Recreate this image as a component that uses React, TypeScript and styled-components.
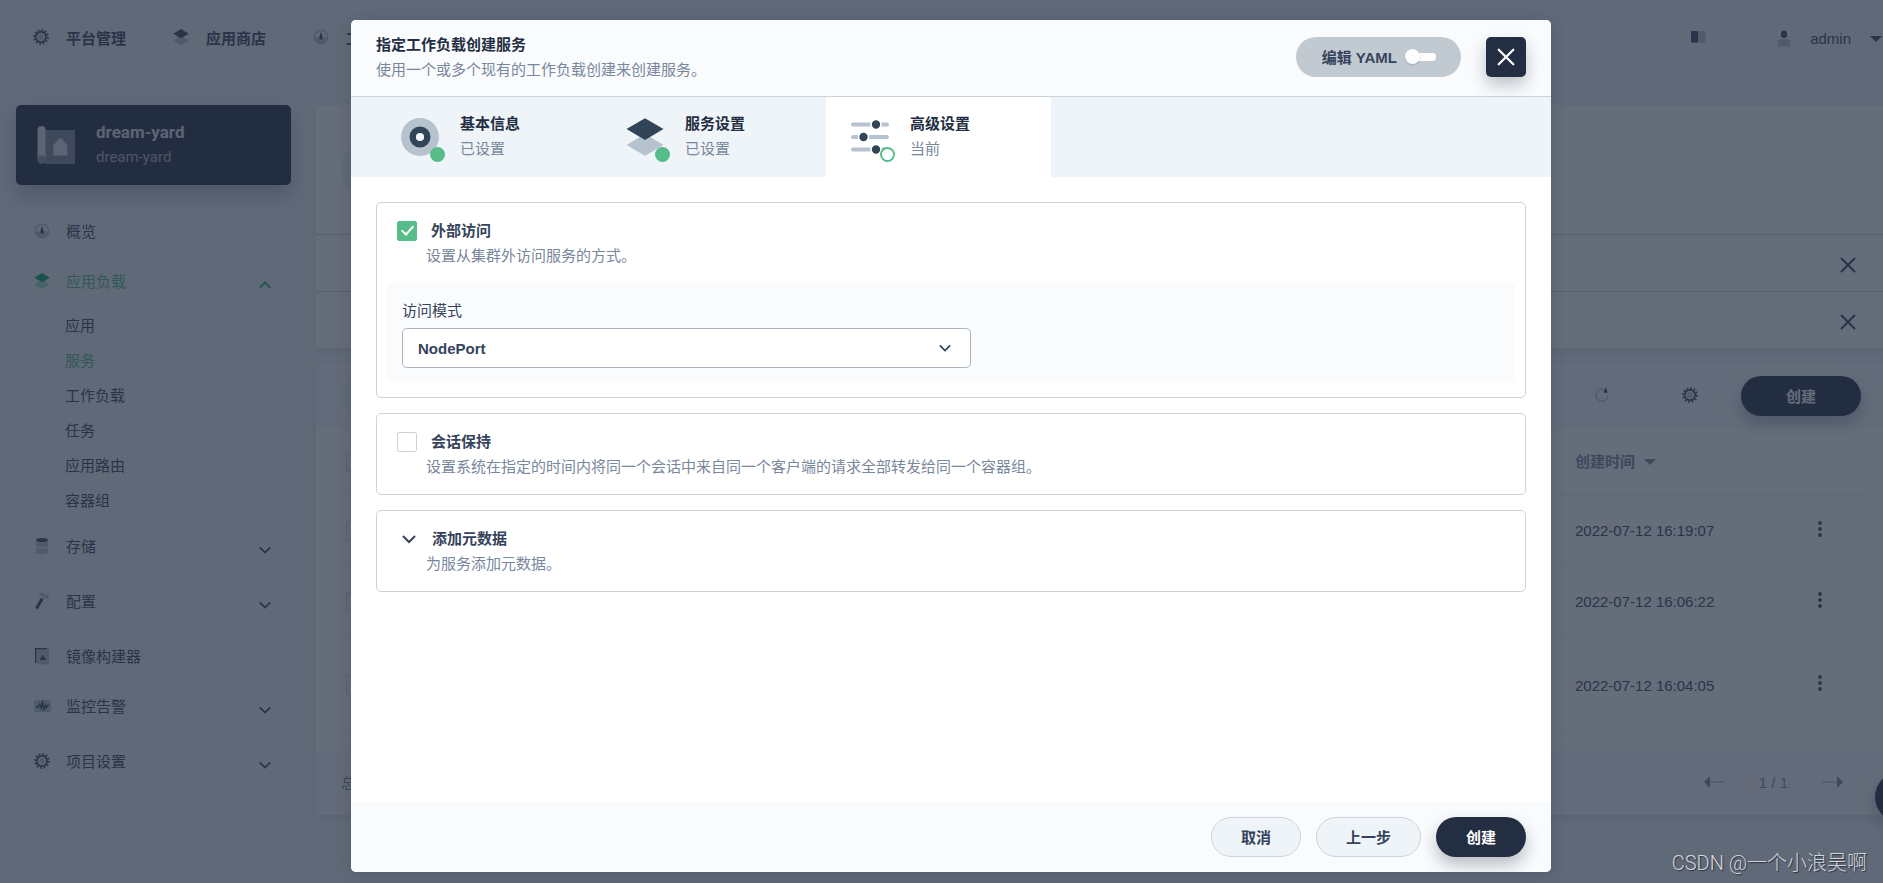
import React from "react";
import styled, { createGlobalStyle, css } from "styled-components";

const color = {
  ink: "#242e42",
  text: "#36435c",
  muted: "#79879c",
  line: "#ccd3db",
  lineDark: "#abb4be",
  page: "#eff4f9",
  soft: "#f9fbfd",
  green: "#55bc8a",
  greenDark: "#00aa72",
  iconDark: "#324558",
  iconLight: "#b6c2cd",
};

const GlobalStyle = createGlobalStyle`
  *, *::before, *::after { box-sizing: border-box; }
  body {
    margin: 0;
    background: ${color.page};
    color: ${color.text};
    font-family: "Liberation Sans", "Noto Sans CJK SC", sans-serif;
    font-size: 15px;
    line-height: 25px;
  }
  button, select, input { font: inherit; color: inherit; }
  button { padding: 0; border: 0; background: none; cursor: pointer; }
  ul { list-style: none; margin: 0; padding: 0; }
  h1, h2, p { margin: 0; font-size: inherit; }
  a { color: inherit; text-decoration: none; }
  svg { display: block; flex: none; }
`;

/* ---------- icons ---------- */

type Tone = { dark?: string; light?: string };

const GearIcon = () => (
  <svg width="16" height="16" viewBox="0 0 16 16" fill="none">
    <circle cx="8" cy="8" r="6.8" stroke={color.iconDark} strokeWidth="2" strokeDasharray="1.78 1.78" />
    <circle cx="8" cy="8" r="5.1" stroke={color.iconDark} strokeWidth="1.7" />
    <circle cx="8" cy="8" r="3" fill={color.iconLight} />
  </svg>
);

const LayersIcon = ({ size = 16, dark = color.iconDark, light = color.iconLight }: Tone & { size?: number }) => (
  <svg width={size} height={size} viewBox="0 0 38 38">
    <path d="M19 16 37.5 27 19 37.8.5 27z" fill={light} />
    <path d="M19 .2 37.5 11 19 22 .5 11z" fill={dark} />
  </svg>
);

const GaugeIcon = () => (
  <svg width="16" height="16" viewBox="0 0 16 16">
    <circle cx="8" cy="8" r="6.8" fill="none" stroke={color.iconLight} strokeWidth="1.4" />
    <path d="M1.400 8.600h13.200a6.600 6.600 0 0 1-13.200 0z" fill={color.iconLight} />
    <path d="M8 2.800 9.800 9a1.800 1.800 0 0 1-3.600 0z" fill={color.iconDark} />
  </svg>
);

const DatabaseIcon = () => (
  <svg width="16" height="18" viewBox="0 0 16 18">
    <path d="M2 3v5.400c0 1 2.600 1.800 6 1.800s6-.8 6-1.800V3zM2 10.600v5c0 1 2.600 1.900 6 1.900s6-.9 6-1.900v-5c-1 .8-3.400 1-6 1s-5-.2-6-1z" fill={color.iconLight} />
    <ellipse cx="8" cy="3" rx="6" ry="2" fill={color.iconDark} />
  </svg>
);

const HammerIcon = () => (
  <svg width="16" height="18" viewBox="0 0 16 18">
    <path d="M3 2.200C6 .4 9.500.6 11.500 2.600c1 .7 2.200.4 3.500 1.200l-.8 3-2.700-.6L8 4.800C7 3 5 2.500 3 2.200z" fill={color.iconLight} />
    <path d="M2.500 16.500 8.200 6.500" stroke={color.iconDark} strokeWidth="3" />
  </svg>
);

const ImageBuilderIcon = () => (
  <svg width="16" height="18" viewBox="0 0 16 18">
    <path d="M2.500 2h12.500v15.500H4.500L2.500 15z" fill={color.iconLight} />
    <path d="M1.700 16V1.600H13" fill="none" stroke={color.iconDark} strokeWidth="1.400" />
    <path d="m8.800 8 3.400 5H5.400z" fill={color.iconDark} />
  </svg>
);

const MonitorIcon = () => (
  <svg width="17" height="12" viewBox="0 0 17 12">
    <rect width="17" height="12" rx="1.500" fill={color.iconLight} />
    <path d="M2 7h2.200l1.500-3 1.500 4 1.500-7 1 9.500L11.500 5l1 2.500L14.500 4" fill="none" stroke={color.iconDark} strokeWidth="1.300" />
  </svg>
);

const BookIcon = () => (
  <svg width="16" height="14" viewBox="0 0 16 14">
    <path d="M8 1h7.500v11.500H8z" fill={color.iconLight} />
    <path d="M1 1h6.200l.8.800V13l-.8-.6H1z" fill={color.iconDark} />
  </svg>
);

const PersonIcon = () => (
  <svg width="14" height="17" viewBox="0 0 14 17">
    <rect x="4" y=".5" width="6" height="7.500" rx="3" fill={color.iconDark} />
    <path d="M1 16.500v-4c0-2 1.500-3.500 3.500-3.500h5c2 0 3.500 1.500 3.500 3.500v4z" fill={color.iconLight} />
  </svg>
);

const ProjectIcon = () => (
  <svg width="38" height="38" viewBox="0 0 38 38">
    <path d="M8 4h30v34H8z" fill="#7d8a9b" />
    <path d="M.5 4a4 4 0 0 1 8 0v28H.5z" fill="#dfe4ea" />
    <circle cx="4.500" cy="33.500" r="4.300" fill="#8e9aa9" />
    <path d="m23.500 11.500 6.800 7.500v10.500H16.500V19z" fill="#dfe4ea" />
  </svg>
);

const ChevronIcon = ({ up, tone = color.iconDark, size = 12 }: { up?: boolean; tone?: string; size?: number }) => (
  <svg width={size} height={size} viewBox="0 0 12 12" fill="none" stroke={tone} strokeWidth="1.700">
    <path d={up ? "M.8 8.600 6 3.400l5.200 5.200" : "M.8 3.400 6 8.600l5.200-5.200"} />
  </svg>
);

const CaretIcon = ({ tone = color.iconDark }: { tone?: string }) => (
  <svg width="12" height="6" viewBox="0 0 12 6">
    <path d="M0 0h12L6 6z" fill={tone} />
  </svg>
);

const CrossIcon = ({ size, tone }: { size: number; tone: string }) => (
  <svg width={size} height={size} viewBox="0 0 16 16" fill="none" stroke={tone} strokeWidth="2" strokeLinecap="round">
    <path d="m1.500 1.500 13 13M14.500 1.500l-13 13" />
  </svg>
);

const RefreshIcon = () => (
  <svg width="16" height="16" viewBox="0 0 16 16">
    <path d="M9.500 2.400A6 6 0 1 0 14 8.500" fill="none" stroke={color.iconLight} strokeWidth="1.600" />
    <path d="M12 0 13.600 6 9.400 5.500z" fill={color.iconDark} />
  </svg>
);

const MoreIcon = () => (
  <svg width="4" height="16" viewBox="0 0 4 16" fill={color.iconDark}>
    <circle cx="2" cy="2" r="1.900" />
    <circle cx="2" cy="8" r="1.900" />
    <circle cx="2" cy="14" r="1.900" />
  </svg>
);

const ArrowIcon = ({ right }: { right?: boolean }) => (
  <svg width="21" height="12" viewBox="0 0 21 12">
    <path d={right ? "M0 6h16" : "M5 6h16"} stroke={color.iconLight} strokeWidth="1.500" />
    <path d={right ? "m21 6-6-6v12z" : "m0 6 6-6v12z"} fill={color.muted} />
  </svg>
);

const TargetIcon = () => (
  <svg width="38" height="38" viewBox="0 0 38 38">
    <circle cx="19" cy="19" r="19" fill={color.iconLight} />
    <circle cx="19" cy="19" r="7.300" fill={color.page} stroke={color.iconDark} strokeWidth="6.400" />
  </svg>
);

const SlidersIcon = () => (
  <svg width="38" height="38" viewBox="0 0 38 38">
    <g stroke={color.iconLight} strokeWidth="4" strokeLinecap="round">
      <path d="M2 6.500h34M2 19h34M2 31.500h34" />
    </g>
    <g fill={color.iconDark} stroke="#fff" strokeWidth="1.600">
      <circle cx="25" cy="6.500" r="5" />
      <circle cx="12.500" cy="19" r="5" />
      <circle cx="25" cy="31.500" r="5" />
    </g>
  </svg>
);

/* ---------- page behind the dialog ---------- */

const Root = styled.div`
  overflow: hidden;
`;

const Shell = styled.div`
  position: relative;
  width: calc(100% + 19px);
  min-height: 100vh;
`;

const TopBar = styled.header`
  display: flex;
  align-items: center;
  justify-content: space-between;
  height: 80px;
  padding: 0 20px 3px 33px;
`;

const TopGroup = styled.nav<{ $gap: number }>`
  display: flex;
  align-items: center;
  gap: ${(p) => p.$gap}px;
`;

const TopLink = styled.a<{ $strong?: boolean }>`
  display: flex;
  align-items: center;
  gap: 17px;
  font-weight: ${(p) => (p.$strong ? 700 : 400)};
`;

const IconLift = styled.span`
  display: flex;
  padding-bottom: 4px;
`;

const UserButton = styled.button`
  display: flex;
  align-items: center;
  gap: 19px;
`;

const Columns = styled.div`
  display: flex;
  align-items: flex-start;
  gap: 25px;
  padding: 25px 16px 0;
`;

const Sidebar = styled.aside`
  flex: none;
  width: 275px;
`;

const ProjectCard = styled.button`
  display: flex;
  align-items: center;
  gap: 21px;
  width: 100%;
  height: 80px;
  padding: 0 21px;
  border-radius: 5px;
  background: ${color.ink};
  box-shadow: 0 10px 20px rgba(36, 46, 66, 0.3);
  font-family: Roboto, "Noto Sans CJK SC", sans-serif;
  text-align: left;
  color: ${color.lineDark};
`;

const ProjectName = styled.strong`
  display: block;
  font-size: 17px;
  color: #dfe4ea;
`;

const NavList = styled.ul`
  && { padding-top: 23px; }
`;

const NavItem = styled.li<{ $group?: boolean }>`
  padding-bottom: ${(p) => (p.$group ? 5 : 0)}px;
`;

const NavLink = styled.a<{ $active?: boolean }>`
  display: flex;
  align-items: center;
  height: 50px;
  padding: 0 20px 3px 18px;
  color: ${(p) => (p.$active ? color.green : color.text)};
`;

const NavIcon = styled.span`
  display: flex;
  width: 32px;
  padding-bottom: 2px;
`;

const NavLabel = styled.span`
  flex: 1;
`;

const NavChevron = styled.span`
  padding-top: 6px;
`;

const SubLink = styled.a<{ $active?: boolean }>`
  display: block;
  padding: 5px 0 5px 49px;
  color: ${(p) => (p.$active ? color.green : color.text)};
`;

const Main = styled.main`
  flex: 1;
  min-width: 0;
  display: grid;
  gap: 15px;
`;

const Panel = styled.section`
  overflow: hidden;
  border-radius: 5px;
  background: #fff;
  box-shadow: 0 4px 8px rgba(36, 46, 66, 0.08);
`;

const BannerHead = styled.div`
  display: flex;
  align-items: center;
  height: 129px;
  padding: 0 25px;
`;

const BannerMark = styled.span`
  width: 60px;
  height: 60px;
  border-radius: 50%;
  background: ${color.page};
`;

const BannerRow = styled.div`
  display: flex;
  align-items: center;
  justify-content: flex-end;
  padding: 22px 30px 18px;
  border-top: 1px solid ${color.line};
`;

const Toolbar = styled.div`
  display: flex;
  align-items: center;
  height: 66px;
  padding: 0 25px;
  background: ${color.soft};
`;

const SearchBox = styled.input`
  flex: 1;
  height: 40px;
  margin-right: 200px;
  padding: 0 20px;
  border: 0;
  border-radius: 20px;
  background: ${color.page};
`;

const ToolButton = styled.button`
  display: flex;
  justify-content: center;
  width: 88px;
  padding-bottom: 3px;
`;

const pill = css`
  height: 40px;
  border-radius: 20px;
  font-weight: 700;
`;

const PrimaryButton = styled.button<{ $width: number }>`
  ${pill}
  width: ${(p) => p.$width}px;
  background: ${color.ink};
  color: #fff;
  box-shadow: 0 8px 16px rgba(36, 46, 66, 0.3);
`;

const CreateSlot = styled.div`
  margin-left: 7px;
`;

const TableWrap = styled.div`
  padding: 0 15px 16px;
`;

const Table = styled.table`
  width: 100%;
  border-collapse: collapse;
  table-layout: fixed;

  th, td {
    padding: 0;
    border-bottom: 1px solid ${color.page};
    text-align: left;
  }
`;

const HeadRow = styled.tr`
  height: 66px;
  color: ${color.muted};
`;

const BodyRow = styled.tr<{ $tall?: boolean }>`
  height: ${(p) => (p.$tall ? 96 : 71)}px;
`;

const CheckHead = styled.th`
  && { padding-left: 15px; }
`;

const CheckCell = styled.td`
  && { padding-left: 15px; }
`;

const DateHead = styled.th`
  width: 194px;
`;

const SortButton = styled.button`
  display: flex;
  align-items: center;
  gap: 9px;
  font-weight: 700;
`;

const ActionHead = styled.th`
  width: 102px;
`;

const ActionButton = styled.button`
  display: block;
  margin: 0 auto;
  padding: 0 8px 4px;
`;

const Pager = styled.div`
  display: flex;
  align-items: center;
  justify-content: space-between;
  height: 65px;
  padding: 0 43px 0 25px;
  background: ${color.soft};
  color: ${color.muted};
`;

const PagerNav = styled.nav`
  display: flex;
  align-items: center;
  gap: 34px;
`;

const HelpBubble = styled.button`
  position: absolute;
  right: -23px;
  bottom: 61px;
  z-index: 1;
  width: 50px;
  height: 50px;
  border-radius: 50%;
  background: ${color.ink};
  box-shadow: 0 8px 16px rgba(36, 46, 66, 0.3);
`;

/* ---------- dialog ---------- */

const Overlay = styled.div`
  position: absolute;
  inset: 0;
  z-index: 2;
  display: flex;
  justify-content: center;
  padding: 20px 20px 11px;
  background: rgba(36, 46, 66, 0.7);
`;

const Dialog = styled.section`
  display: flex;
  flex-direction: column;
  width: 100%;
  max-width: 1200px;
  overflow: hidden;
  border-radius: 5px;
  background: #fff;
  box-shadow: 0 4px 16px rgba(36, 46, 66, 0.2);
`;

const DialogHead = styled.header`
  display: flex;
  align-items: center;
  gap: 25px;
  padding: 12px 25px 14px;
  border-bottom: 1px solid ${color.line};
  background: ${color.soft};
`;

const HeadText = styled.div`
  flex: 1;
`;

const Title = styled.h1`
  font-weight: 700;
  color: ${color.ink};
`;

const Hint = styled.p`
  color: ${color.muted};
`;

const YamlSwitch = styled.label`
  ${pill}
  display: flex;
  align-items: center;
  gap: 8px;
  padding: 0 25px 0 26px;
  background: #c1c9d1;
`;

const SwitchInput = styled.input`
  appearance: none;
  position: relative;
  width: 31px;
  height: 16px;
  margin: 0;

  &::before, &::after {
    content: "";
    position: absolute;
    background: #fff;
  }
  &::before {
    inset: 4px 0 4px 6px;
    border-radius: 4px;
  }
  &::after {
    top: 0;
    left: 0;
    width: 15px;
    height: 15px;
    border-radius: 50%;
    box-shadow: 0 1px 2px rgba(36, 46, 66, 0.2);
  }
`;

const CloseButton = styled.button`
  display: grid;
  place-items: center;
  width: 40px;
  height: 40px;
  border-radius: 5px;
  background: ${color.ink};
  box-shadow: 0 8px 16px rgba(36, 46, 66, 0.28);
`;

const Tabs = styled.div`
  display: flex;
  padding: 0 25px;
  background: ${color.page};
`;

const Tab = styled.button<{ $current?: boolean }>`
  display: flex;
  align-items: center;
  gap: 21px;
  width: 225px;
  height: 80px;
  padding: 0 25px;
  background: ${(p) => (p.$current ? "#fff" : "transparent")};
  text-align: left;
`;

const TabIcon = styled.span`
  position: relative;
`;

const TabStatus = styled.span<{ $current?: boolean }>`
  position: absolute;
  right: -6px;
  bottom: -6px;
  width: 15px;
  height: 15px;
  border: 2px solid ${color.green};
  border-radius: 50%;
  background: ${(p) => (p.$current ? "#fff" : color.green)};
`;

const TabText = styled.span`
  padding-bottom: 2px;
`;

const TabTitle = styled.strong`
  display: block;
  color: ${color.ink};
`;

const TabState = styled.span`
  display: block;
  color: ${color.muted};
`;

const DialogBody = styled.div`
  flex: 1;
  display: flex;
  flex-direction: column;
  gap: 15px;
  padding: 25px;
`;

const Card = styled.section`
  border: 1px solid ${color.line};
  border-radius: 5px;
`;

const CardHead = styled.div`
  padding: 15px 20px;
`;

const CardTitle = styled.label`
  display: flex;
  align-items: center;
  gap: 14px;
  font-weight: 700;
`;

const CardHint = styled(Hint)`
  padding-left: 29px;
`;

const Expander = styled.button`
  display: flex;
  align-items: center;
  gap: 16px;
  padding-left: 5px;
  font-weight: 700;
`;

const CheckBox = styled.input`
  appearance: none;
  display: block;
  position: relative;
  flex: none;
  width: 20px;
  height: 20px;
  margin: 0;
  border: 1px solid ${color.line};
  border-radius: 2px;
  background: #fff;

  &:checked {
    border-color: ${color.green};
    background: ${color.green};
  }
  &:checked::after {
    content: "";
    position: absolute;
    top: 1px;
    left: 6px;
    width: 7px;
    height: 12px;
    border: solid #fff;
    border-width: 0 2px 2px 0;
    transform: rotate(42deg);
  }
`;

const FieldPanel = styled.div`
  margin: 0 10px 14px;
  padding: 15px;
  border-radius: 5px;
  background: ${color.soft};
`;

const FieldLabel = styled.label`
  display: block;
  margin-bottom: 5px;
`;

const SelectWrap = styled.div`
  position: relative;
  max-width: 569px;
`;

const Select = styled.select`
  appearance: none;
  display: block;
  width: 100%;
  height: 40px;
  padding: 0 15px;
  border: 1px solid ${color.lineDark};
  border-radius: 5px;
  background: #fff;
  font-weight: 700;
`;

const SelectChevron = styled.span`
  position: absolute;
  top: 14px;
  right: 20px;
  pointer-events: none;
`;

const DialogFoot = styled.footer`
  display: flex;
  justify-content: flex-end;
  gap: 15px;
  padding: 15px 25px;
  background: ${color.soft};
`;

const PlainButton = styled.button<{ $width: number }>`
  ${pill}
  width: ${(p) => p.$width}px;
  border: 1px solid ${color.line};
  background: ${color.page};
`;

const Watermark = styled.span`
  position: absolute;
  right: 35px;
  bottom: 7px;
  z-index: 3;
  font-family: Roboto, "Noto Sans CJK SC", sans-serif;
  font-size: 20px;
  font-weight: 300;
  color: #d3d6da;
  text-shadow: 1px 1px 1px rgba(20, 26, 38, 0.7);
`;

const topLinks = [
  { label: "平台管理", icon: <GearIcon /> },
  { label: "应用商店", icon: <LayersIcon /> },
  { label: "工作", icon: <GaugeIcon /> },
];

const workloads = ["应用", "服务", "工作负载", "任务", "应用路由", "容器组"];

const navGroups = [
  { label: "存储", icon: <DatabaseIcon />, group: true },
  { label: "配置", icon: <HammerIcon />, group: true },
  { label: "镜像构建器", icon: <ImageBuilderIcon />, group: false },
  { label: "监控告警", icon: <MonitorIcon />, group: true },
  { label: "项目设置", icon: <GearIcon />, group: true },
];

const rows = [
  { created: "2022-07-12 16:19:07" },
  { created: "2022-07-12 16:06:22" },
  { created: "2022-07-12 16:04:05", tall: true },
];

const tabs = [
  { title: "基本信息", state: "已设置", icon: <TargetIcon /> },
  { title: "服务设置", state: "已设置", icon: <LayersIcon size={38} /> },
  { title: "高级设置", state: "当前", icon: <SlidersIcon />, current: true },
];

const ServicePage = () => (
  <>
    <TopBar>
      <TopGroup $gap={47}>
        {topLinks.map((item) => (
          <TopLink key={item.label} href="#" $strong>
            <IconLift>{item.icon}</IconLift>
            {item.label}
          </TopLink>
        ))}
      </TopGroup>
      <TopGroup $gap={71}>
        <TopLink href="#" aria-label="文档">
          <IconLift><BookIcon /></IconLift>
        </TopLink>
        <UserButton type="button">
          <PersonIcon />
          admin
          <CaretIcon />
        </UserButton>
      </TopGroup>
    </TopBar>
    <Columns>
      <Sidebar>
        <ProjectCard type="button">
          <ProjectIcon />
          <span>
            <ProjectName>dream-yard</ProjectName>
            dream-yard
          </span>
        </ProjectCard>
        <NavList>
          <NavItem>
            <NavLink href="#">
              <NavIcon><GaugeIcon /></NavIcon>
              <NavLabel>概览</NavLabel>
            </NavLink>
          </NavItem>
          <NavItem $group>
            <NavLink href="#" $active>
              <NavIcon><LayersIcon dark={color.greenDark} light="#90e0c5" /></NavIcon>
              <NavLabel>应用负载</NavLabel>
              <NavChevron><ChevronIcon up tone={color.greenDark} /></NavChevron>
            </NavLink>
            <ul>
              {workloads.map((name) => (
                <li key={name}>
                  <SubLink href="#" $active={name === "服务"}>{name}</SubLink>
                </li>
              ))}
            </ul>
          </NavItem>
          {navGroups.map((item) => (
            <NavItem key={item.label} $group={item.group}>
              <NavLink href="#">
                <NavIcon>{item.icon}</NavIcon>
                <NavLabel>{item.label}</NavLabel>
                {item.group && <NavChevron><ChevronIcon /></NavChevron>}
              </NavLink>
            </NavItem>
          ))}
        </NavList>
      </Sidebar>
      <Main>
        <Panel>
          <BannerHead><BannerMark /></BannerHead>
          {[0, 1].map((tip) => (
            <BannerRow key={tip}>
              <button type="button" aria-label="关闭提示">
                <CrossIcon size={16} tone={color.iconDark} />
              </button>
            </BannerRow>
          ))}
        </Panel>
        <Panel>
          <Toolbar>
            <SearchBox type="search" aria-label="搜索" />
            <ToolButton type="button" aria-label="刷新"><RefreshIcon /></ToolButton>
            <ToolButton type="button" aria-label="列设置"><GearIcon /></ToolButton>
            <CreateSlot><PrimaryButton type="button" $width={120}>创建</PrimaryButton></CreateSlot>
          </Toolbar>
          <TableWrap>
            <Table>
              <thead>
                <HeadRow>
                  <CheckHead><CheckBox type="checkbox" aria-label="全选" /></CheckHead>
                  <DateHead>
                    <SortButton type="button">创建时间<CaretIcon tone={color.muted} /></SortButton>
                  </DateHead>
                  <ActionHead />
                </HeadRow>
              </thead>
              <tbody>
                {rows.map((row) => (
                  <BodyRow key={row.created} $tall={row.tall}>
                    <CheckCell><CheckBox type="checkbox" aria-label={row.created} /></CheckCell>
                    <td>{row.created}</td>
                    <td><ActionButton type="button" aria-label="更多操作"><MoreIcon /></ActionButton></td>
                  </BodyRow>
                ))}
              </tbody>
            </Table>
          </TableWrap>
          <Pager>
            <span>总数：3</span>
            <PagerNav>
              <button type="button" aria-label="上一页"><ArrowIcon /></button>
              1 / 1
              <button type="button" aria-label="下一页"><ArrowIcon right /></button>
            </PagerNav>
          </Pager>
        </Panel>
      </Main>
    </Columns>
    <HelpBubble type="button" aria-label="帮助" />
  </>
);

const CreateServiceDialog = () => (
  <Dialog role="dialog" aria-modal="true" aria-labelledby="dialog-title">
    <DialogHead>
      <HeadText>
        <Title id="dialog-title">指定工作负载创建服务</Title>
        <Hint>使用一个或多个现有的工作负载创建来创建服务。</Hint>
      </HeadText>
      <YamlSwitch>
        编辑 YAML
        <SwitchInput type="checkbox" role="switch" />
      </YamlSwitch>
      <CloseButton type="button" aria-label="关闭"><CrossIcon size={18} tone="#fff" /></CloseButton>
    </DialogHead>
    <Tabs role="tablist">
      {tabs.map((tab) => (
        <Tab key={tab.title} type="button" role="tab" aria-selected={!!tab.current} $current={tab.current}>
          <TabIcon>
            {tab.icon}
            <TabStatus $current={tab.current} />
          </TabIcon>
          <TabText>
            <TabTitle>{tab.title}</TabTitle>
            <TabState>{tab.state}</TabState>
          </TabText>
        </Tab>
      ))}
    </Tabs>
    <DialogBody>
      <Card>
        <CardHead>
          <CardTitle>
            <CheckBox type="checkbox" defaultChecked />
            外部访问
          </CardTitle>
          <CardHint>设置从集群外访问服务的方式。</CardHint>
        </CardHead>
        <FieldPanel>
          <FieldLabel htmlFor="access-mode">访问模式</FieldLabel>
          <SelectWrap>
            <Select id="access-mode" defaultValue="NodePort">
              <option>NodePort</option>
            </Select>
            <SelectChevron><ChevronIcon /></SelectChevron>
          </SelectWrap>
        </FieldPanel>
      </Card>
      <Card>
        <CardHead>
          <CardTitle>
            <CheckBox type="checkbox" />
            会话保持
          </CardTitle>
          <CardHint>设置系统在指定的时间内将同一个会话中来自同一个客户端的请求全部转发给同一个容器组。</CardHint>
        </CardHead>
      </Card>
      <Card>
        <CardHead>
          <Expander type="button" aria-expanded="false">
            <ChevronIcon size={14} />
            添加元数据
          </Expander>
          <CardHint>为服务添加元数据。</CardHint>
        </CardHead>
      </Card>
    </DialogBody>
    <DialogFoot>
      <PlainButton type="button" $width={90}>取消</PlainButton>
      <PlainButton type="button" $width={105}>上一步</PlainButton>
      <PrimaryButton type="button" $width={90}>创建</PrimaryButton>
    </DialogFoot>
  </Dialog>
);

export default function App() {
  return (
    <Root>
      <GlobalStyle />
      <Shell>
        <ServicePage />
        <Overlay>
          <CreateServiceDialog />
        </Overlay>
        <Watermark>CSDN @一个小浪吴啊</Watermark>
      </Shell>
    </Root>
  );
}
